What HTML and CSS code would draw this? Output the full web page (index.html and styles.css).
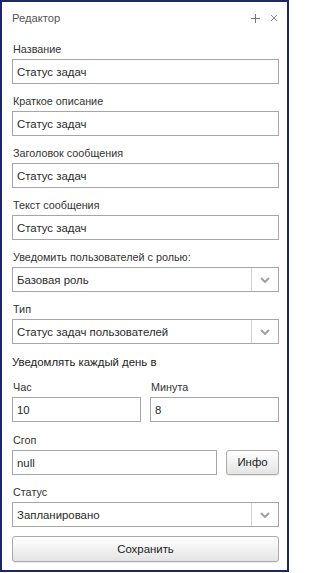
FILE: index.html
```html
<!DOCTYPE html>
<html lang="ru">
<head>
<meta charset="utf-8">
<title>Редактор</title>
<link rel="stylesheet" href="styles.css">
</head>
<body>
<div class="panel">
  <div class="titlebar">
    <span class="title">Редактор</span>
    <span class="tools">
      <svg class="tool" width="9" height="9" viewBox="0 0 9 9"><path d="M4.5 0V9M0 4.5H9" stroke="#777" stroke-width="1"/></svg>
      <svg class="tool" width="8" height="8" viewBox="0 0 8 8"><path d="M1 1L7 7M7 1L1 7" stroke="#888" stroke-width="1"/></svg>
    </span>
  </div>
  <div class="form">
    <div class="field">
      <div class="label">Название</div>
      <div class="input">Статус задач</div>
    </div>
    <div class="field">
      <div class="label">Краткое описание</div>
      <div class="input">Статус задач</div>
    </div>
    <div class="field">
      <div class="label">Заголовок сообщения</div>
      <div class="input">Статус задач</div>
    </div>
    <div class="field">
      <div class="label">Текст сообщения</div>
      <div class="input">Статус задач</div>
    </div>
    <div class="field">
      <div class="label">Уведомить пользователей с ролью:</div>
      <div class="select"><span class="value">Базовая роль</span><span class="arrow"><svg width="10" height="6" viewBox="0 0 10 6"><path d="M1 1L5 5L9 1" fill="none" stroke="#a0a0a0" stroke-width="2"/></svg></span></div>
    </div>
    <div class="field">
      <div class="label">Тип</div>
      <div class="select"><span class="value">Статус задач пользователей</span><span class="arrow"><svg width="10" height="6" viewBox="0 0 10 6"><path d="M1 1L5 5L9 1" fill="none" stroke="#a0a0a0" stroke-width="2"/></svg></span></div>
    </div>
    <div class="heading">Уведомлять каждый день в</div>
    <div class="row2">
      <div class="field">
        <div class="label">Час</div>
        <div class="input">10</div>
      </div>
      <div class="field">
        <div class="label">Минута</div>
        <div class="input">8</div>
      </div>
    </div>
    <div class="field">
      <div class="label">Сгоп</div>
      <div class="inline">
        <div class="input grow">null</div>
        <div class="button small">Инфо</div>
      </div>
    </div>
    <div class="field">
      <div class="label">Статус</div>
      <div class="select"><span class="value">Запланировано</span><span class="arrow"><svg width="10" height="6" viewBox="0 0 10 6"><path d="M1 1L5 5L9 1" fill="none" stroke="#a0a0a0" stroke-width="2"/></svg></span></div>
    </div>
    <div class="button save">Сохранить</div>
  </div>
</div>
</body>
</html>
```
FILE: styles.css
```css
html, body {
  margin: 0;
  padding: 0;
  background: #fff;
}
body {
  font-family: "Liberation Sans", Arial, sans-serif;
  color: #222;
}
.panel {
  width: 289px;
  height: 572px;
  box-sizing: border-box;
  border: 2px solid #1b2766;
  border-top-color: #1e2a5e;
  background: #fff;
  display: flex;
  flex-direction: column;
}
.titlebar {
  height: 36px;
  display: flex;
  align-items: center;
  justify-content: space-between;
  padding: 0 9px 4px 10px;
  box-sizing: border-box;
}
.title {
  font-size: 11.2px;
  color: #555;
}
.tools {
  display: flex;
  align-items: center;
  gap: 10px;
}
.form {
  padding: 4px 8px 0 10px;
  display: flex;
  flex-direction: column;
}
.field {
  display: flex;
  flex-direction: column;
  margin-bottom: 10px;
}
.label {
  font-size: 10.8px;
  line-height: 14px;
  color: #333;
  margin-bottom: 3px;
  padding-left: 1px;
}
.input, .select {
  height: 25px;
  box-sizing: border-box;
  border: 1px solid #a6a6a6;
  background: #fff;
  font-size: 11.4px;
  line-height: 24px;
  padding-left: 4px;
  color: #2a2a2a;
}
.select {
  display: flex;
  padding-left: 0;
}
.select .value {
  flex: 1;
  padding-left: 4px;
}
.select .arrow {
  width: 26px;
  border-left: 1px solid #d0d0d0;
  display: flex;
  align-items: center;
  justify-content: center;
}
.heading {
  font-size: 11.4px;
  line-height: 14px;
  color: #222;
  margin: 1px 0 11px;
}
.row2 {
  display: grid;
  grid-template-columns: 1fr 1fr;
  column-gap: 9px;
}
.row2 .field {
  margin-bottom: 11px;
}
.inline {
  display: flex;
  gap: 9px;
}
.grow {
  flex: 1;
}
.button {
  box-sizing: border-box;
  border: 1px solid #aaa;
  border-radius: 3px;
  background: linear-gradient(#ffffff, #e4e4e4);
  font-size: 11.4px;
  color: #222;
  text-align: center;
  box-shadow: 0 1px 0 rgba(0,0,0,0.08);
}
.button.small {
  width: 53px;
  height: 25px;
  line-height: 23px;
}
.button.save {
  height: 26px;
  line-height: 24px;
  margin-top: -1px;
}
```
